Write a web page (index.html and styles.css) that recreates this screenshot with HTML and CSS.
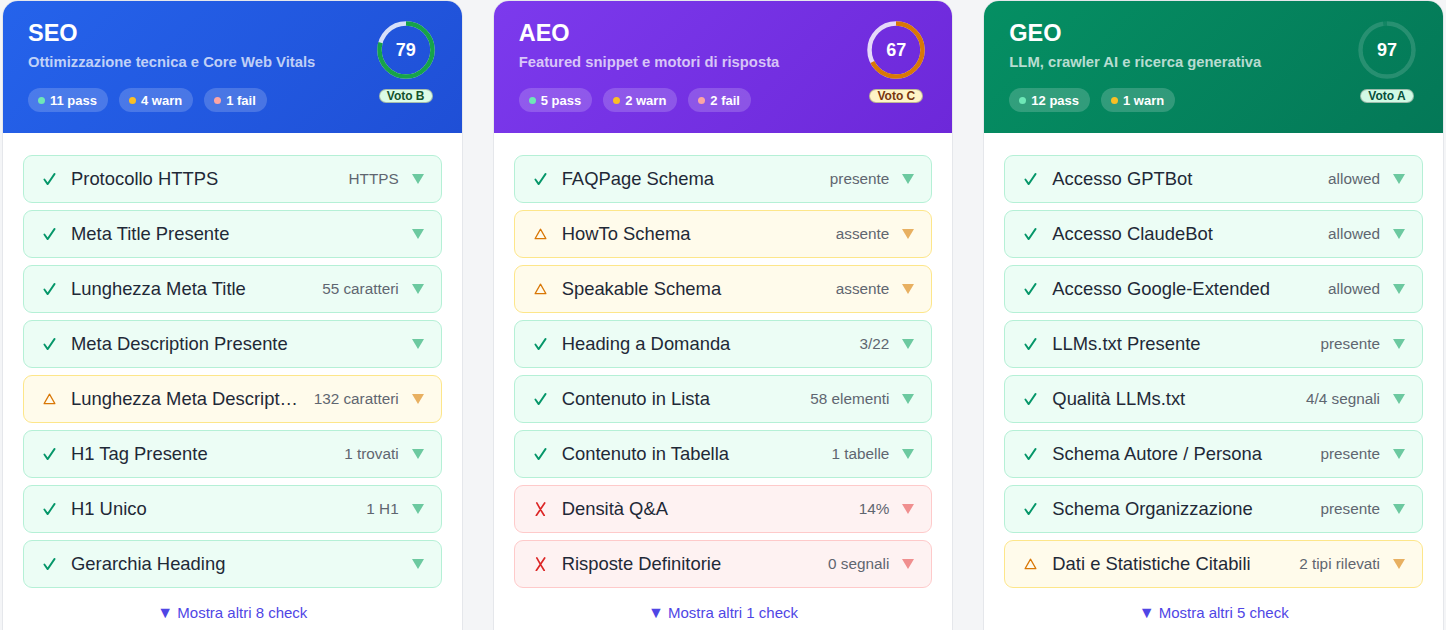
FILE: index.html
```html
<!DOCTYPE html>
<html lang="it">
<head>
<meta charset="utf-8">
<title>SEO AEO GEO</title>
<link rel="stylesheet" href="styles.css">
</head>
<body>
<div class="grid">

  <section class="card">
    <header class="head seo">
      <div class="head-info">
        <h2 class="title">SEO</h2>
        <p class="sub">Ottimizzazione tecnica e Core Web Vitals</p>
        <div class="pills">
          <span class="pill"><i class="dot d-pass"></i>11 pass</span>
          <span class="pill"><i class="dot d-warn"></i>4 warn</span>
          <span class="pill"><i class="dot d-fail"></i>1 fail</span>
        </div>
      </div>
      <div class="score">
        <div class="gauge">
          <svg viewBox="0 0 58 58" width="58" height="58">
            <circle cx="29" cy="29" r="26.5" class="track"/>
            <circle cx="29" cy="29" r="26.5" class="prog p-green" stroke-dasharray="131.5 166.5" transform="rotate(-90 29 29)"/>
          </svg>
          <span class="num">79</span>
        </div>
        <span class="grade g-b">Voto B</span>
      </div>
    </header>
    <div class="body">
      <div class="row pass"><svg class="ic" viewBox="0 0 14 14"><path d="M1.5 7.5 L5 12.5 L12.5 1.5"/></svg><span class="label">Protocollo HTTPS</span><span class="val">HTTPS</span><svg class="chev" viewBox="0 0 12 10"><polygon points="0,0 12,0 6,10"/></svg></div>
      <div class="row pass"><svg class="ic" viewBox="0 0 14 14"><path d="M1.5 7.5 L5 12.5 L12.5 1.5"/></svg><span class="label">Meta Title Presente</span><span class="val"></span><svg class="chev" viewBox="0 0 12 10"><polygon points="0,0 12,0 6,10"/></svg></div>
      <div class="row pass"><svg class="ic" viewBox="0 0 14 14"><path d="M1.5 7.5 L5 12.5 L12.5 1.5"/></svg><span class="label">Lunghezza Meta Title</span><span class="val">55 caratteri</span><svg class="chev" viewBox="0 0 12 10"><polygon points="0,0 12,0 6,10"/></svg></div>
      <div class="row pass"><svg class="ic" viewBox="0 0 14 14"><path d="M1.5 7.5 L5 12.5 L12.5 1.5"/></svg><span class="label">Meta Description Presente</span><span class="val"></span><svg class="chev" viewBox="0 0 12 10"><polygon points="0,0 12,0 6,10"/></svg></div>
      <div class="row warn"><svg class="ic" viewBox="0 0 14 14"><path d="M7 1.8 L12.8 12 L1.2 12 Z"/></svg><span class="label">Lunghezza Meta Description</span><span class="val">132 caratteri</span><svg class="chev" viewBox="0 0 12 10"><polygon points="0,0 12,0 6,10"/></svg></div>
      <div class="row pass"><svg class="ic" viewBox="0 0 14 14"><path d="M1.5 7.5 L5 12.5 L12.5 1.5"/></svg><span class="label">H1 Tag Presente</span><span class="val">1 trovati</span><svg class="chev" viewBox="0 0 12 10"><polygon points="0,0 12,0 6,10"/></svg></div>
      <div class="row pass"><svg class="ic" viewBox="0 0 14 14"><path d="M1.5 7.5 L5 12.5 L12.5 1.5"/></svg><span class="label">H1 Unico</span><span class="val">1 H1</span><svg class="chev" viewBox="0 0 12 10"><polygon points="0,0 12,0 6,10"/></svg></div>
      <div class="row pass"><svg class="ic" viewBox="0 0 14 14"><path d="M1.5 7.5 L5 12.5 L12.5 1.5"/></svg><span class="label">Gerarchia Heading</span><span class="val"></span><svg class="chev" viewBox="0 0 12 10"><polygon points="0,0 12,0 6,10"/></svg></div>
      <a class="more"><span class="tri">▼</span> Mostra altri 8 check</a>
    </div>
  </section>

  <section class="card">
    <header class="head aeo">
      <div class="head-info">
        <h2 class="title">AEO</h2>
        <p class="sub">Featured snippet e motori di risposta</p>
        <div class="pills">
          <span class="pill"><i class="dot d-pass"></i>5 pass</span>
          <span class="pill"><i class="dot d-warn"></i>2 warn</span>
          <span class="pill"><i class="dot d-fail"></i>2 fail</span>
        </div>
      </div>
      <div class="score">
        <div class="gauge">
          <svg viewBox="0 0 58 58" width="58" height="58">
            <circle cx="29" cy="29" r="26.5" class="track"/>
            <circle cx="29" cy="29" r="26.5" class="prog p-orange" stroke-dasharray="111.6 166.5" transform="rotate(-90 29 29)"/>
          </svg>
          <span class="num">67</span>
        </div>
        <span class="grade g-c">Voto C</span>
      </div>
    </header>
    <div class="body">
      <div class="row pass"><svg class="ic" viewBox="0 0 14 14"><path d="M1.5 7.5 L5 12.5 L12.5 1.5"/></svg><span class="label">FAQPage Schema</span><span class="val">presente</span><svg class="chev" viewBox="0 0 12 10"><polygon points="0,0 12,0 6,10"/></svg></div>
      <div class="row warn"><svg class="ic" viewBox="0 0 14 14"><path d="M7 1.8 L12.8 12 L1.2 12 Z"/></svg><span class="label">HowTo Schema</span><span class="val">assente</span><svg class="chev" viewBox="0 0 12 10"><polygon points="0,0 12,0 6,10"/></svg></div>
      <div class="row warn"><svg class="ic" viewBox="0 0 14 14"><path d="M7 1.8 L12.8 12 L1.2 12 Z"/></svg><span class="label">Speakable Schema</span><span class="val">assente</span><svg class="chev" viewBox="0 0 12 10"><polygon points="0,0 12,0 6,10"/></svg></div>
      <div class="row pass"><svg class="ic" viewBox="0 0 14 14"><path d="M1.5 7.5 L5 12.5 L12.5 1.5"/></svg><span class="label">Heading a Domanda</span><span class="val">3/22</span><svg class="chev" viewBox="0 0 12 10"><polygon points="0,0 12,0 6,10"/></svg></div>
      <div class="row pass"><svg class="ic" viewBox="0 0 14 14"><path d="M1.5 7.5 L5 12.5 L12.5 1.5"/></svg><span class="label">Contenuto in Lista</span><span class="val">58 elementi</span><svg class="chev" viewBox="0 0 12 10"><polygon points="0,0 12,0 6,10"/></svg></div>
      <div class="row pass"><svg class="ic" viewBox="0 0 14 14"><path d="M1.5 7.5 L5 12.5 L12.5 1.5"/></svg><span class="label">Contenuto in Tabella</span><span class="val">1 tabelle</span><svg class="chev" viewBox="0 0 12 10"><polygon points="0,0 12,0 6,10"/></svg></div>
      <div class="row fail"><svg class="ic" viewBox="0 0 14 14"><path d="M3 0.5 Q6.5 7 11 14 M11.5 0.5 Q7.5 6.5 2.5 14"/></svg><span class="label">Densità Q&amp;A</span><span class="val">14%</span><svg class="chev" viewBox="0 0 12 10"><polygon points="0,0 12,0 6,10"/></svg></div>
      <div class="row fail"><svg class="ic" viewBox="0 0 14 14"><path d="M3 0.5 Q6.5 7 11 14 M11.5 0.5 Q7.5 6.5 2.5 14"/></svg><span class="label">Risposte Definitorie</span><span class="val">0 segnali</span><svg class="chev" viewBox="0 0 12 10"><polygon points="0,0 12,0 6,10"/></svg></div>
      <a class="more"><span class="tri">▼</span> Mostra altri 1 check</a>
    </div>
  </section>

  <section class="card">
    <header class="head geo">
      <div class="head-info">
        <h2 class="title">GEO</h2>
        <p class="sub">LLM, crawler AI e ricerca generativa</p>
        <div class="pills">
          <span class="pill"><i class="dot d-pass"></i>12 pass</span>
          <span class="pill"><i class="dot d-warn"></i>1 warn</span>
        </div>
      </div>
      <div class="score">
        <div class="gauge">
          <svg viewBox="0 0 58 58" width="58" height="58">
            <circle cx="29" cy="29" r="26.5" class="track t-faint"/>
            <circle cx="29" cy="29" r="26.5" class="prog p-teal" stroke-dasharray="161.5 166.5" transform="rotate(-90 29 29)"/>
          </svg>
          <span class="num">97</span>
        </div>
        <span class="grade g-a">Voto A</span>
      </div>
    </header>
    <div class="body">
      <div class="row pass"><svg class="ic" viewBox="0 0 14 14"><path d="M1.5 7.5 L5 12.5 L12.5 1.5"/></svg><span class="label">Accesso GPTBot</span><span class="val">allowed</span><svg class="chev" viewBox="0 0 12 10"><polygon points="0,0 12,0 6,10"/></svg></div>
      <div class="row pass"><svg class="ic" viewBox="0 0 14 14"><path d="M1.5 7.5 L5 12.5 L12.5 1.5"/></svg><span class="label">Accesso ClaudeBot</span><span class="val">allowed</span><svg class="chev" viewBox="0 0 12 10"><polygon points="0,0 12,0 6,10"/></svg></div>
      <div class="row pass"><svg class="ic" viewBox="0 0 14 14"><path d="M1.5 7.5 L5 12.5 L12.5 1.5"/></svg><span class="label">Accesso Google-Extended</span><span class="val">allowed</span><svg class="chev" viewBox="0 0 12 10"><polygon points="0,0 12,0 6,10"/></svg></div>
      <div class="row pass"><svg class="ic" viewBox="0 0 14 14"><path d="M1.5 7.5 L5 12.5 L12.5 1.5"/></svg><span class="label">LLMs.txt Presente</span><span class="val">presente</span><svg class="chev" viewBox="0 0 12 10"><polygon points="0,0 12,0 6,10"/></svg></div>
      <div class="row pass"><svg class="ic" viewBox="0 0 14 14"><path d="M1.5 7.5 L5 12.5 L12.5 1.5"/></svg><span class="label">Qualità LLMs.txt</span><span class="val">4/4 segnali</span><svg class="chev" viewBox="0 0 12 10"><polygon points="0,0 12,0 6,10"/></svg></div>
      <div class="row pass"><svg class="ic" viewBox="0 0 14 14"><path d="M1.5 7.5 L5 12.5 L12.5 1.5"/></svg><span class="label">Schema Autore / Persona</span><span class="val">presente</span><svg class="chev" viewBox="0 0 12 10"><polygon points="0,0 12,0 6,10"/></svg></div>
      <div class="row pass"><svg class="ic" viewBox="0 0 14 14"><path d="M1.5 7.5 L5 12.5 L12.5 1.5"/></svg><span class="label">Schema Organizzazione</span><span class="val">presente</span><svg class="chev" viewBox="0 0 12 10"><polygon points="0,0 12,0 6,10"/></svg></div>
      <div class="row warn"><svg class="ic" viewBox="0 0 14 14"><path d="M7 1.8 L12.8 12 L1.2 12 Z"/></svg><span class="label">Dati e Statistiche Citabili</span><span class="val">2 tipi rilevati</span><svg class="chev" viewBox="0 0 12 10"><polygon points="0,0 12,0 6,10"/></svg></div>
      <a class="more"><span class="tri">▼</span> Mostra altri 5 check</a>
    </div>
  </section>

</div>
</body>
</html>
```

FILE: styles.css
```css
* { box-sizing: border-box; }

body {
  margin: 0;
  background: #f4f5f7;
  font-family: "Liberation Sans", Arial, sans-serif;
  color: #1f2937;
}

.grid {
  display: grid;
  grid-template-columns: repeat(3, 1fr);
  gap: 30px;
  padding: 0 2px;
}

.card {
  background: #ffffff;
  border: 1px solid #e5e7eb;
  border-radius: 16px;
  overflow: hidden;
  height: 660px;
}

.head {
  height: 132px;
  display: flex;
  justify-content: space-between;
  padding: 19px 27px 0 25px;
  color: #ffffff;
}

.seo { background: linear-gradient(135deg, #2563eb 0%, #1f4fd6 100%); }
.aeo { background: linear-gradient(135deg, #7c3aed 0%, #6d28d9 100%); }
.geo { background: linear-gradient(135deg, #058f63 0%, #047857 100%); }

.title {
  margin: 0;
  font-size: 23.5px;
  font-weight: 700;
  line-height: 26px;
}

.sub {
  margin: 7px 0 0;
  font-size: 14.8px;
  font-weight: 700;
  line-height: 18px;
  color: rgba(255, 255, 255, 0.72);
}

.pills {
  display: flex;
  gap: 11px;
  margin-top: 17px;
}

.pill {
  display: inline-flex;
  align-items: center;
  height: 24px;
  padding: 0 11px 0 10px;
  border-radius: 12px;
  background: rgba(255, 255, 255, 0.18);
  font-size: 13px;
  font-weight: 700;
}

.dot {
  width: 7px;
  height: 7px;
  border-radius: 50%;
  margin-right: 5px;
}
.d-pass { background: #6ee7b7; }
.d-warn { background: #fbbf24; }
.d-fail { background: #fca5a5; }

.score {
  display: flex;
  flex-direction: column;
  align-items: center;
  padding-top: 1px;
}

.gauge {
  position: relative;
  width: 58px;
  height: 58px;
}
.gauge svg { display: block; }

.track {
  fill: none;
  stroke: rgba(255, 255, 255, 0.82);
  stroke-width: 4.5;
}
.t-faint { stroke: rgba(255, 255, 255, 0.06); }

.prog {
  fill: none;
  stroke-width: 4.5;
}
.p-green { stroke: #16a34a; }
.p-orange { stroke: #d97706; }
.p-teal { stroke: rgba(255, 255, 255, 0.09); }

.num {
  position: absolute;
  inset: 0;
  display: flex;
  align-items: center;
  justify-content: center;
  font-size: 18px;
  font-weight: 700;
  color: #ffffff;
}

.grade {
  margin-top: 10px;
  height: 14px;
  line-height: 12px;
  padding: 0 7px;
  border-radius: 7px;
  font-size: 12px;
  font-weight: 700;
  border: 1px solid rgba(0, 0, 0, 0.25);
}
.g-b { background: #dcfce7; color: #14532d; }
.g-c { background: #fef3c7; color: #78350f; }
.g-a { background: #d1fae5; color: #064e3b; }

.body {
  padding: 22px 20px 0 20px;
  display: flex;
  flex-direction: column;
  gap: 7px;
}

.row {
  display: flex;
  align-items: center;
  height: 48px;
  padding: 0 17px 0 19px;
  border: 1px solid;
  border-radius: 9px;
  font-size: 18.4px;
}
.pass { background: #ecfdf5; border-color: #b5f0d6; }
.warn { background: #fffbeb; border-color: #fde68a; }
.fail { background: #fef2f2; border-color: #fecaca; }

.ic {
  width: 13px;
  height: 14px;
  margin: 0 15px 0 0;
  flex: none;
  fill: none;
  stroke-linecap: round;
  stroke-linejoin: round;
}
.pass .ic { stroke: #059669; stroke-width: 2; }
.warn .ic { stroke: #d97706; stroke-width: 1.3; }
.fail .ic { stroke: #dc2626; stroke-width: 1.8; }

.label {
  flex: 1;
  min-width: 0;
  white-space: nowrap;
  overflow: hidden;
  text-overflow: ellipsis;
  color: #1f2937;
}

.val {
  margin-left: 13px;
  font-size: 15.3px;
  color: #5f6670;
  white-space: nowrap;
}

.chev {
  width: 12px;
  height: 10px;
  margin-left: 13px;
  flex: none;
}
.pass .chev { fill: #6cc9a0; }
.warn .chev { fill: #e8b061; }
.fail .chev { fill: #f08f8f; }

.more {
  display: block;
  margin-top: 9px;
  text-align: center;
  font-size: 15px;
  color: #4f46e5;
  cursor: pointer;
}
.tri { font-size: 16px; }
```
